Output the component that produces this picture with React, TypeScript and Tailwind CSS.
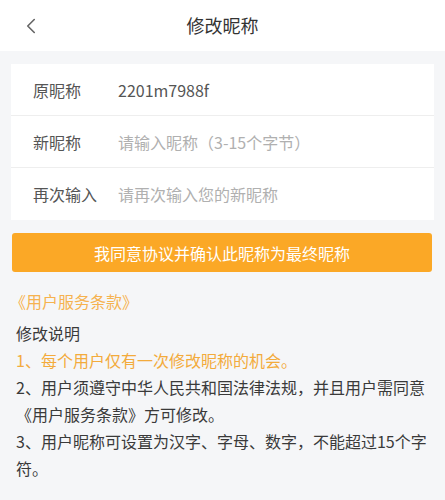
import { ChevronLeft } from "lucide-react";

const rows = [
  { label: "原昵称", value: "2201m7988f", placeholder: false },
  { label: "新昵称", value: "请输入昵称（3-15个字节）", placeholder: true },
  { label: "再次输入", value: "请再次输入您的新昵称", placeholder: true },
];

export default function App() {
  return (
    <div
      className="w-[445px] h-[500px] bg-[#f5f6f8] overflow-hidden"
      style={{ fontFamily: '"Noto Sans CJK SC", "Noto Sans", sans-serif' }}
    >
      <div className="h-[51px] bg-white flex items-center relative">
        <ChevronLeft size={26} strokeWidth={1.5} className="absolute left-[18px] text-[#666]" />
        <p className="flex-1 text-center text-[18px] text-[#333] m-0">修改昵称</p>
      </div>

      <div className="mx-[11px] mt-[13px] bg-white">
        {rows.map((row, i) => (
          <div
            key={row.label}
            className={`h-[52px] flex items-center px-[22px] ${i < rows.length - 1 ? "border-b border-[#eeeeee]" : ""}`}
          >
            <span className="w-[85px] text-[16px] text-[#555]">{row.label}</span>
            <span className={`text-[16px] ${row.placeholder ? "text-[#b0b0b0]" : "text-[#555]"}`}>
              {row.value}
            </span>
          </div>
        ))}
      </div>

      <button className="mx-[12px] mt-[13px] w-[420px] h-[39px] rounded-[3px] bg-[#fba826] text-white text-[16px] flex items-center justify-center">
        我同意协议并确认此昵称为最终昵称
      </button>

      <p className="mt-[17px] ml-[10px] text-[16px] text-[#f6b24f] m-0">《用户服务条款》</p>

      <div className="mt-[7px] ml-[16px] mr-[18px] text-[16px] leading-[27px] text-[#3a3a3a]">
        <p className="m-0">修改说明</p>
        <p className="m-0 text-[#f3ab3c]">1、每个用户仅有一次修改昵称的机会。</p>
        <p className="m-0">2、用户须遵守中华人民共和国法律法规，并且用户需同意《用户服务条款》方可修改。</p>
        <p className="m-0">3、用户昵称可设置为汉字、字母、数字，不能超过15个字符。</p>
      </div>
    </div>
  );
}
